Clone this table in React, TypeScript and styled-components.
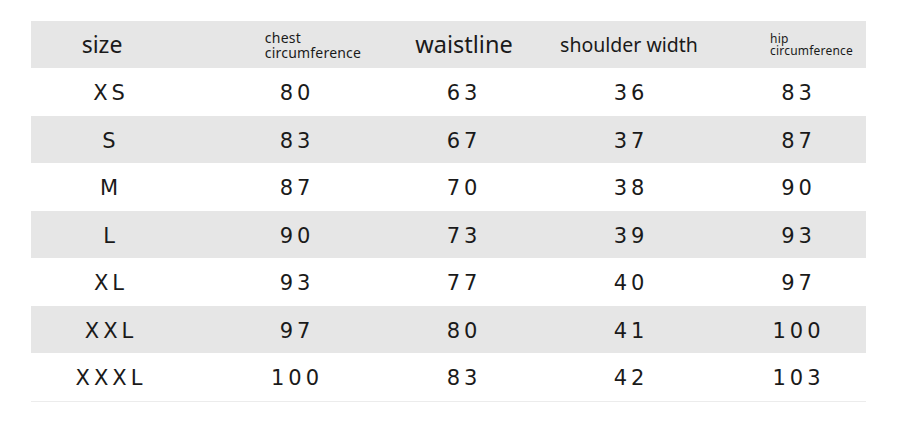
import { createGlobalStyle } from 'styled-components';
import styled from 'styled-components';

const GlobalStyle = createGlobalStyle`
  html, body {
    margin: 0;
    padding: 0;
    background: #ffffff;
  }
  body {
    font-family: 'DejaVu Sans', 'Liberation Sans', sans-serif;
    color: #1c1c1c;
  }
`;

const Page = styled.div`
  padding: 21px 0 0 31px;
  width: 835px;
`;

const Table = styled.div`
  display: grid;
  grid-template-columns: 156px 216px 118px 216px 129px;
  border-bottom: 1px solid #ececec;
`;

const Row = styled.div<{ $shaded: boolean; $h: number }>`
  display: contents;
  & > div {
    background: ${p => (p.$shaded ? '#e6e6e6' : '#ffffff')};
    height: ${p => p.$h}px;
    box-sizing: border-box;
  }
  & > div:last-child {
    padding-right: 10px;
  }
`;

const HeadCell = styled.div<{ $shift: number }>`
  display: flex;
  align-items: center;
  justify-content: center;
  font-family: 'Noto Sans', 'Liberation Sans', sans-serif;
  color: #1a1a1a;
  & > span {
    margin-left: ${p => p.$shift}px;
  }
`;

const BigHead = styled.span<{ $size: number }>`
  font-size: ${p => p.$size}px;
  line-height: 1;
`;

const SmallHead = styled.span<{ $size: number; $lh: number }>`
  font-size: ${p => p.$size}px;
  line-height: ${p => p.$lh}px;
  letter-spacing: 0.2px;
  text-align: left;
  display: block;
`;

const Cell = styled.div`
  display: flex;
  align-items: center;
  justify-content: center;
  font-size: 21px;
  letter-spacing: 4px;
  color: #1a1a1a;
  padding-left: 4px;
  padding-top: 3px;
`;

const rows: string[][] = [
  ['XS', '80', '63', '36', '83'],
  ['S', '83', '67', '37', '87'],
  ['M', '87', '70', '38', '90'],
  ['L', '90', '73', '39', '93'],
  ['XL', '93', '77', '40', '97'],
  ['XXL', '97', '80', '41', '100'],
  ['XXXL', '100', '83', '42', '103'],
];

export default function App() {
  return (
    <>
      <GlobalStyle />
      <Page>
        <Table>
          <Row $shaded $h={47}>
            <HeadCell $shift={-14}>
              <BigHead $size={23}>size</BigHead>
            </HeadCell>
            <HeadCell $shift={36}>
              <SmallHead $size={14} $lh={15}>
                chest
                <br />
                circumference
              </SmallHead>
            </HeadCell>
            <HeadCell $shift={4}>
              <BigHead $size={23.5}>waistline</BigHead>
            </HeadCell>
            <HeadCell $shift={0}>
              <BigHead $size={19.5}>shoulder width</BigHead>
            </HeadCell>
            <HeadCell $shift={30}>
              <SmallHead $size={12} $lh={12}>
                hip
                <br />
                circumference
              </SmallHead>
            </HeadCell>
          </Row>
          {rows.map((r, i) => (
            <Row key={r[0]} $shaded={i % 2 === 1} $h={47.5}>
              {r.map((v, j) => (
                <Cell key={j}>{v}</Cell>
              ))}
            </Row>
          ))}
        </Table>
      </Page>
    </>
  );
}
